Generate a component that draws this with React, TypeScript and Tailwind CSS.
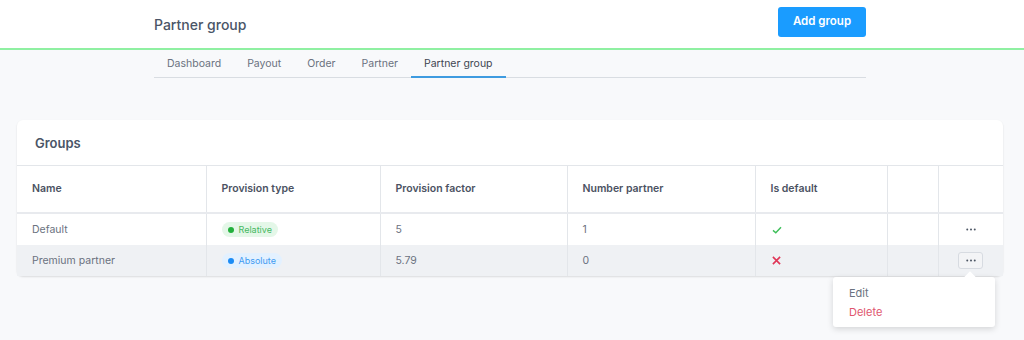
import React from 'react';

const tabs = ['Dashboard', 'Payout', 'Order', 'Partner', 'Partner group'];

const cols = [
  { label: 'Name', w: 'w-[189px]' },
  { label: 'Provision type', w: 'w-[174px]' },
  { label: 'Provision factor', w: 'w-[187px]' },
  { label: 'Number partner', w: 'w-[188px]' },
  { label: 'Is default', w: 'w-[132px]' },
  { label: '', w: 'w-[51px]' },
  { label: '', w: 'w-[65px]' },
];

const rows = [
  { name: 'Default', type: 'Relative', factor: '5', count: '1', isDefault: true },
  { name: 'Premium partner', type: 'Absolute', factor: '5.79', count: '0', isDefault: false },
];

const Badge: React.FC<{ type: string }> = ({ type }) =>
  type === 'Relative' ? (
    <span className="inline-flex items-center gap-[5px] h-[15px] px-[6px] rounded-full bg-[#e4f7e8] text-[#45b862] text-[9px]">
      <span className="w-[6px] h-[6px] rounded-full bg-[#22b03c]" />
      Relative
    </span>
  ) : (
    <span className="inline-flex items-center gap-[5px] h-[15px] px-[6px] rounded-full bg-[#e3f1ff] text-[#3f9bf2] text-[9px]">
      <span className="w-[6px] h-[6px] rounded-full bg-[#1c8cf5]" />
      Absolute
    </span>
  );

const Dots: React.FC = () => (
  <svg viewBox="0 0 12 3" className="w-[10px] h-[3px] fill-[#4b5563]">
    <circle cx="1.5" cy="1.5" r="1.2" />
    <circle cx="6" cy="1.5" r="1.2" />
    <circle cx="10.5" cy="1.5" r="1.2" />
  </svg>
);

const App: React.FC = () => {
  return (
    <div className="w-[1024px] h-[340px] bg-[#f8f9fb] font-['Inter',sans-serif] overflow-hidden">
      <header className="h-[50px] bg-white border-b-2 border-[#8ff0a2]">
        <div className="ml-[154px] w-[712px] h-[48px] flex items-center justify-between">
          <h1 className="text-[14px] font-medium text-[#4a5567]">Partner group</h1>
          <button className="mt-[-4px] w-[88px] h-[30px] rounded-[3px] bg-[#1a9cff] text-white text-[11.5px] font-semibold">
            Add group
          </button>
        </div>
      </header>

      <nav className="ml-[154px] w-[712px] h-[28px] flex border-b border-[#d9dde2]">
        {tabs.map((t, i) => (
          <div
            key={t}
            className={
              i === tabs.length - 1
                ? 'px-[13px] pt-[6px] text-[10.5px] text-[#3f4652] border-b-2 border-[#3e9be0] mb-[-1px]'
                : 'px-[13px] pt-[6px] text-[10.5px] text-[#6b7280]'
            }
          >
            {t}
          </div>
        ))}
      </nav>

      <div className="relative ml-[17px] mt-[42px] w-[986px] bg-white rounded-[6px] shadow-[0_1px_2px_rgba(0,0,0,0.12)]">
        <div className="h-[46px] flex items-center px-[18px] pt-[2px] border-b border-[#e3e6ea]">
          <h2 className="text-[13px] font-semibold text-[#4a5567]">Groups</h2>
        </div>
        <table className="w-full border-collapse text-[10.5px]">
          <thead>
            <tr className="h-[47px] border-b-2 border-[#e8eaee]">
              {cols.map((c, i) => (
                <th
                  key={i}
                  className={`${c.w} text-left font-semibold text-[#4b5262] px-[15px] ${i < cols.length - 1 ? 'border-r border-[#e3e6ea]' : ''}`}
                >
                  {c.label}
                </th>
              ))}
            </tr>
          </thead>
          <tbody className="text-[#6b7280]">
            {rows.map((r, ri) => (
              <tr key={r.name} className={ri === 1 ? 'h-[31px] bg-[#eff1f4]' : 'h-[32px]'}>
                <td className="px-[15px] border-r border-[#e3e6ea]">{r.name}</td>
                <td className="px-[15px] border-r border-[#e3e6ea]">
                  <Badge type={r.type} />
                </td>
                <td className="px-[15px] border-r border-[#e3e6ea]">{r.factor}</td>
                <td className="px-[15px] border-r border-[#e3e6ea]">{r.count}</td>
                <td className="px-[15px] border-r border-[#e3e6ea]">
                  {r.isDefault ? (
                    <svg viewBox="0 0 12 10" className="w-[10px] h-[8px] ml-[1px]">
                      <path d="M1 5.5 L4.5 8.5 L11 1.5" stroke="#3fbf5a" strokeWidth="1.8" fill="none" />
                    </svg>
                  ) : (
                    <svg viewBox="0 0 10 10" className="w-[9px] h-[9px] ml-[1px]">
                      <path d="M1 1 L9 9 M9 1 L1 9" stroke="#e03657" strokeWidth="1.8" fill="none" />
                    </svg>
                  )}
                </td>
                <td className="border-r border-[#e3e6ea]" />
                <td>
                  <div className="flex justify-center">
                    {ri === 1 ? (
                      <span className="w-[25px] h-[17px] rounded-[3px] border border-[#d7dbe1] bg-[#f3f4f6] flex items-center justify-center">
                        <Dots />
                      </span>
                    ) : (
                      <Dots />
                    )}
                  </div>
                </td>
              </tr>
            ))}
          </tbody>
        </table>

        <div className="absolute left-[816px] top-[157px] w-[162px] h-[50px] bg-white rounded-[3px] shadow-[0_2px_6px_rgba(0,0,0,0.15)] flex flex-col justify-center px-[16px] gap-[5px] text-[11px]">
          <span className="absolute -top-[4px] left-[133px] w-[8px] h-[8px] bg-white rotate-45" />
          <span className="text-[#6b7280] leading-[14px]">Edit</span>
          <span className="text-[#e0566e] leading-[14px]">Delete</span>
        </div>
      </div>
    </div>
  );
};

export default App;
